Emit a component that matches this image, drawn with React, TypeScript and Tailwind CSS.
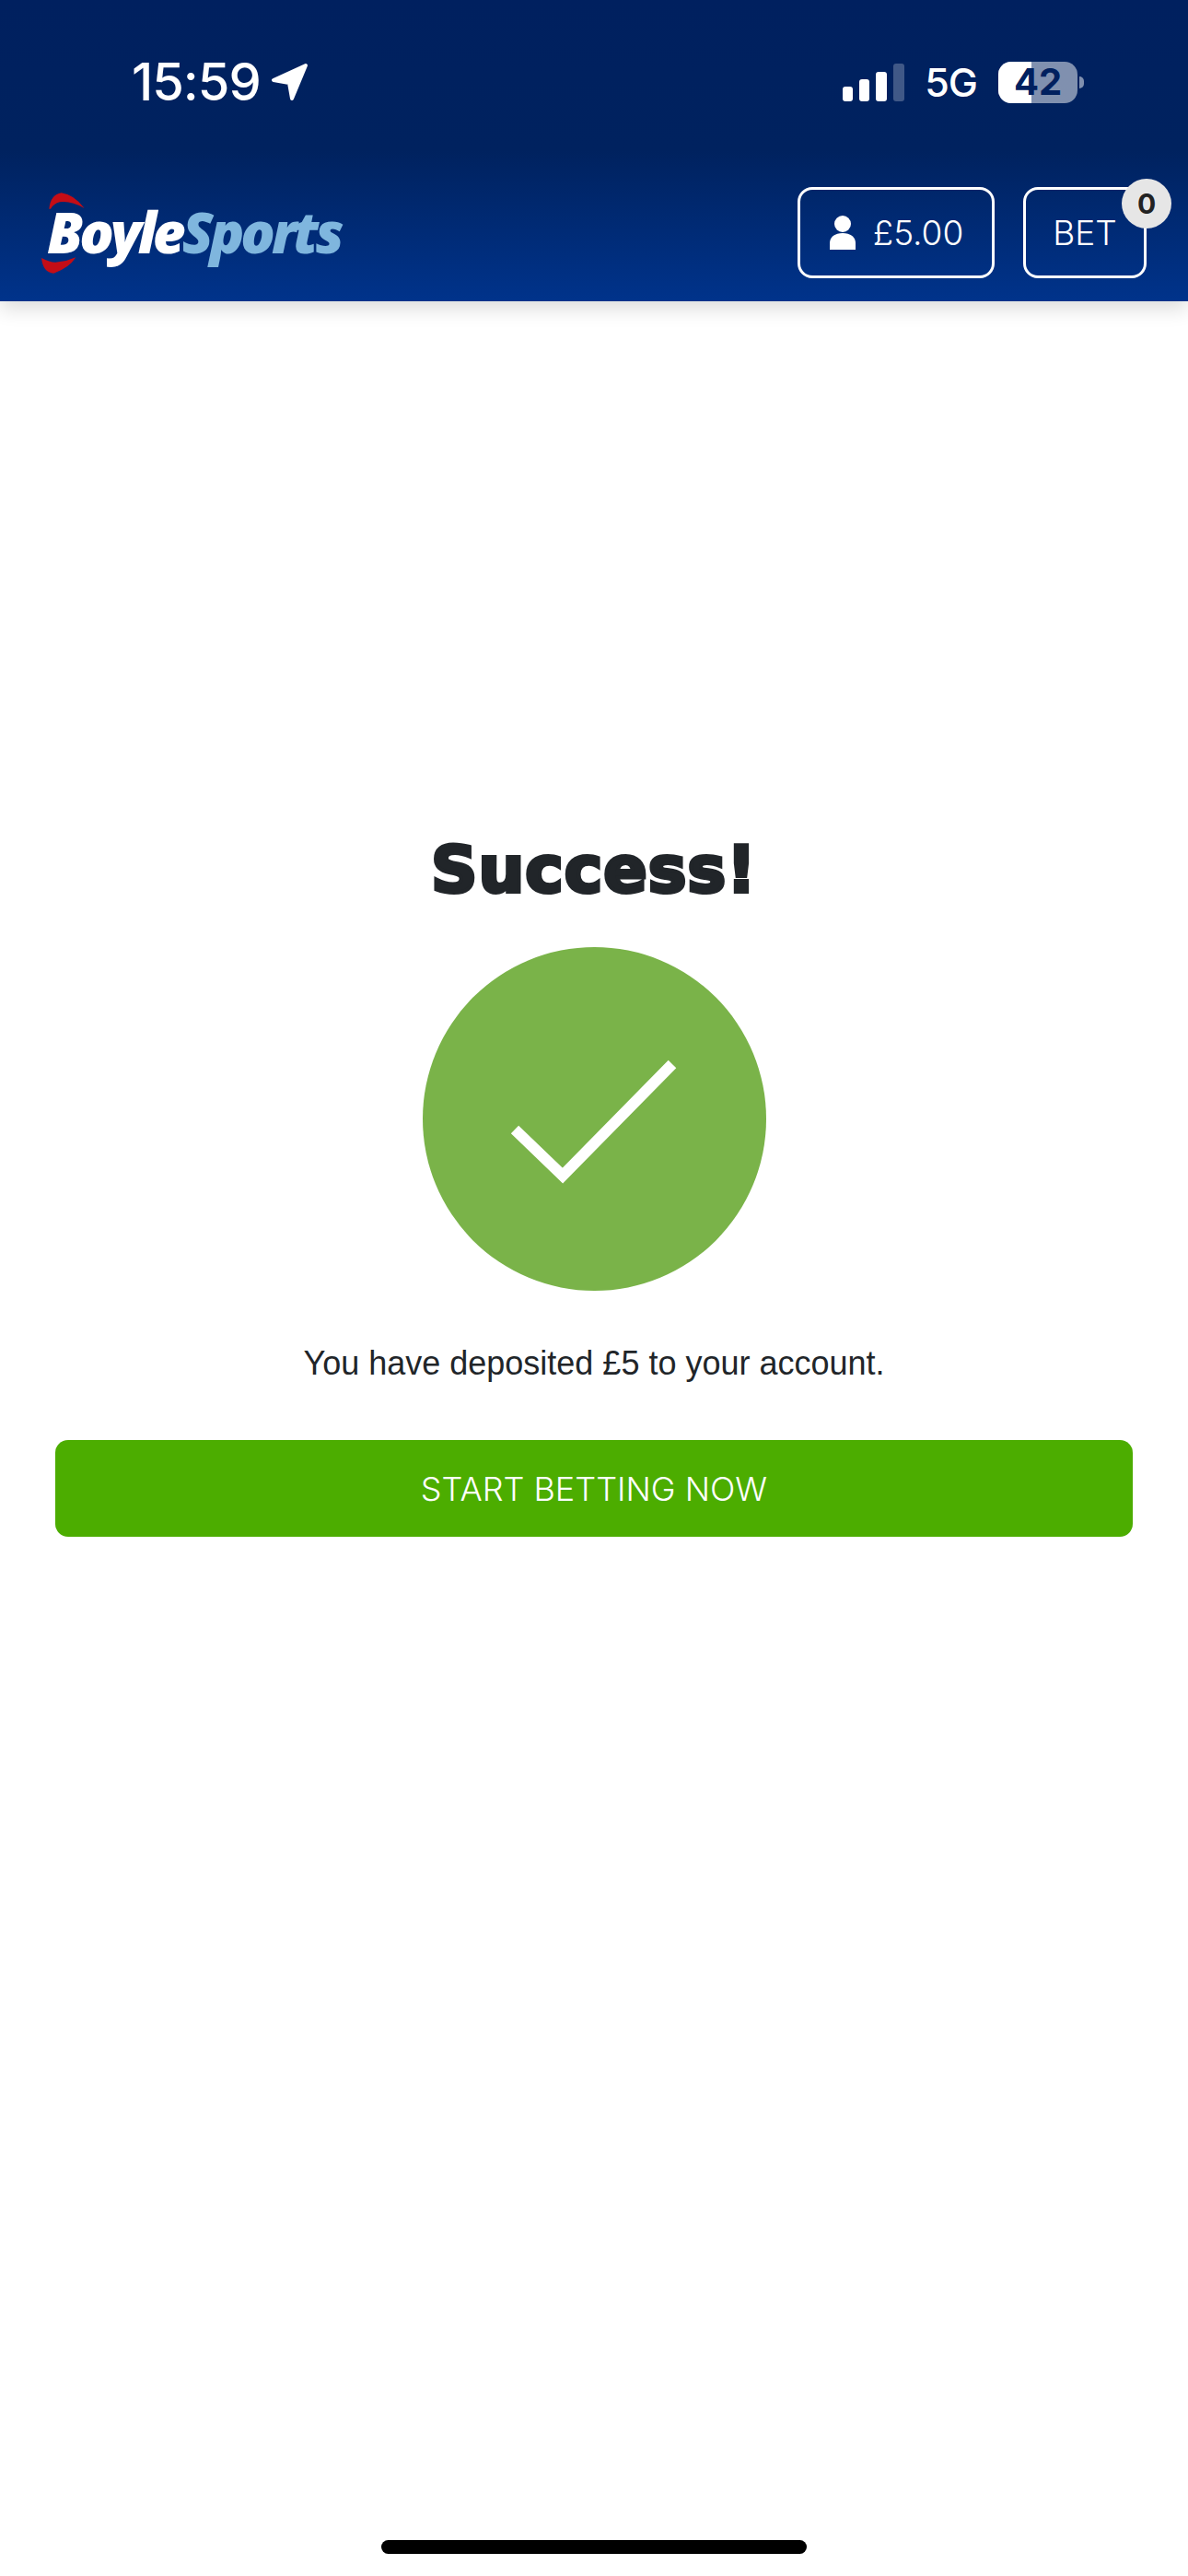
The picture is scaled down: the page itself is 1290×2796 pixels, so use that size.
import React from 'react';

const StatusBar: React.FC = () => (
  <div className="flex h-[64px] items-center justify-between pl-[143px] pr-[113px] [font-family:Inter,sans-serif] text-white">
    <div className="flex items-center gap-[11px]">
      <span className="text-[56px] font-medium leading-none tracking-[-1px]">15:59</span>
      <svg width="42" height="42" viewBox="0 0 42 42" fill="white" stroke="white" strokeWidth="4" strokeLinejoin="round">
        <path d="M38 3 L3 19 L20 22 L23 39 Z" />
      </svg>
    </div>
    <div className="flex items-center">
      <div className="flex items-end gap-[7px]">
        <span className="h-[16px] w-[11px] rounded-[3px] bg-white" />
        <span className="h-[24px] w-[11px] rounded-[3px] bg-white" />
        <span className="h-[32px] w-[12px] rounded-[3px] bg-white" />
        <span className="h-[41px] w-[12px] rounded-[3px] bg-white/25" />
      </div>
      <span className="ml-[22px] text-[43px] font-medium leading-none tracking-[-1px]">5G</span>
      <div className="relative ml-[23px] h-[45px] w-[86px] rounded-[14px] bg-white/50">
        <div className="h-full w-[36px] rounded-l-[14px] bg-white" />
        <span className="absolute inset-0 flex items-center justify-center text-[40px] font-bold leading-none text-[#00205f]">42</span>
      </div>
      <span className="ml-[2px] h-[13px] w-[5px] rounded-r-full bg-white/50" />
    </div>
  </div>
);

const Logo: React.FC = () => (
  <div className="relative flex h-[110px] w-[350px] items-center pl-[21px]">
    <svg className="absolute left-0 top-0" width="350" height="110" viewBox="0 0 1050 330" fill="#c40d16">
      <path d="M70 92 Q75 45 110 40 Q150 45 185 90 Q140 65 105 70 Q85 75 75 92 Z" />
      <path d="M45 252 Q80 270 100 265 Q130 262 157 250 Q135 285 85 302 Q50 300 45 252 Z" />
    </svg>
    <span className="text-[62px] font-extrabold italic leading-none tracking-[-4px] [font-family:'Open_Sans',sans-serif]">
      <span className="text-white">Boyle</span>
      <span className="text-[#7fb6de]">Sports</span>
    </span>
  </div>
);

const Header: React.FC = () => (
  <header className="relative z-10 h-[327px] bg-gradient-to-b from-[#00205f] via-[#00225f] to-[#00338b] pt-[57px] shadow-[0_8px_20px_rgba(0,0,0,0.14)]">
    <StatusBar />
    <div className="mt-[74px] flex items-start justify-between pl-[30px] pr-[45px]">
      <div className="mt-[1px]">
        <Logo />
      </div>
      <div className="mt-[8px] flex gap-[31px] [font-family:Inter,sans-serif] text-white">
        <button className="flex h-[99px] w-[214px] items-center justify-center gap-[18px] rounded-[16px] border-[3px] border-white">
          <svg width="30" height="37" viewBox="0 0 30 37" fill="white">
            <circle cx="15" cy="9" r="9" />
            <path d="M1 37 V30 C1 23 7 19 15 19 C23 19 29 23 29 30 V37 Z" />
          </svg>
          <span className="text-[37px] font-light leading-none">£5.00</span>
        </button>
        <button className="relative flex h-[99px] w-[134px] items-center justify-center rounded-[16px] border-[3px] border-white">
          <span className="text-[37px] font-light leading-none">BET</span>
          <span className="absolute -right-[30px] -top-[12px] flex h-[54px] w-[54px] items-center justify-center rounded-full bg-[#e6e6e6] text-[30px] font-bold leading-none text-[#222222]">
            0
          </span>
        </button>
      </div>
    </div>
  </header>
);

export default function App() {
  return (
    <div className="flex min-h-[2796px] w-full flex-col bg-white">
      <Header />
      <main className="flex flex-col items-center px-[60px] pt-[582px]">
        <h1 className="text-[70px] font-bold leading-[70px] tracking-[1px] text-[#212529] [-webkit-text-stroke:4px_#212529] [font-family:'DejaVu_Sans',sans-serif]">
          Success!
        </h1>
        <div className="mt-[49px] flex h-[373px] w-[373px] items-center justify-center rounded-full bg-[#7ab349]">
          <svg width="373" height="373" viewBox="0 0 373 373" fill="none" stroke="white" strokeWidth="12">
            <path d="M100 198 L152 248 L271 127" />
          </svg>
        </div>
        <p className="mt-[57px] text-[36px] leading-[44px] text-[#212529] [font-family:'Liberation_Sans',sans-serif]">
          You have deposited £5 to your account.
        </p>
        <button className="mt-[61px] h-[105px] w-full rounded-[14px] bg-[#4cad00] text-[36px] font-light text-white [font-family:Inter,sans-serif]">
          START BETTING NOW
        </button>
      </main>
      <div className="mt-auto flex justify-center pb-[24px]">
        <span className="h-[15px] w-[462px] rounded-full bg-black" />
      </div>
    </div>
  );
}
